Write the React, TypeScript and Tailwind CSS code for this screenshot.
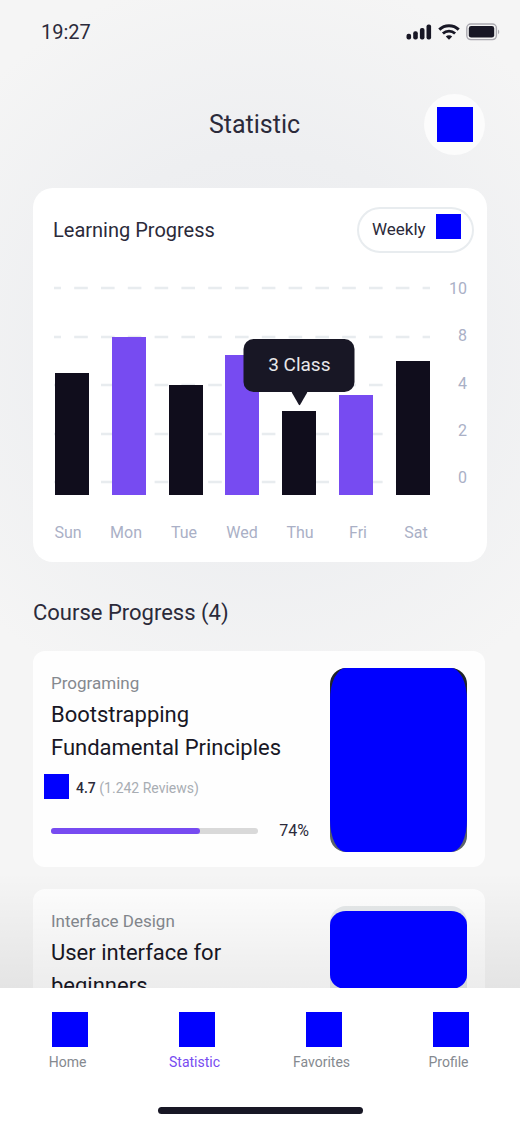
import React from "react";

type Bar = { day: string; height: number; accent?: boolean; tip?: string };

const bars: Bar[] = [
  { day: "Sun", height: 122 },
  { day: "Mon", height: 158, accent: true },
  { day: "Tue", height: 110 },
  { day: "Wed", height: 140, accent: true },
  { day: "Thu", height: 84, tip: "3 Class" },
  { day: "Fri", height: 100, accent: true },
  { day: "Sat", height: 134 },
];

const scale = ["10", "8", "4", "2", "0"];
const gridLines = [2, 51, 99, 148, 196];

function StatusBar() {
  return (
    <div className="flex h-16 shrink-0 items-center justify-between pl-[41px] pr-5 text-xl text-[#2b2a3a]">
      <span>19:27</span>
      <div className="flex items-center gap-[6px]">
        <svg width="26" height="16" viewBox="0 0 26 16" fill="#181725" aria-hidden="true">
          <rect x="0.5" y="9.8" width="4.6" height="5.7" rx="2" />
          <rect x="7.2" y="7.2" width="4.6" height="8.3" rx="2" />
          <rect x="13.9" y="4" width="4.6" height="11.5" rx="2" />
          <rect x="20.5" y="0.5" width="4.6" height="15" rx="2" />
        </svg>
        <svg width="22" height="16" viewBox="0 0 22 16" fill="none" stroke="#181725" aria-hidden="true">
          <path d="M1.3 5.6a14 14 0 0 1 19.4 0" strokeWidth="3" />
          <path d="M4.9 9.5a8.8 8.8 0 0 1 12.2 0" strokeWidth="2.8" />
          <path d="M11 15.8 7.8 12.6a4.6 4.6 0 0 1 6.4 0Z" fill="#181725" stroke="none" />
        </svg>
        <svg width="34" height="18" viewBox="0 0 34 18" aria-hidden="true">
          <rect x="0.8" y="1" width="29.6" height="15.6" rx="4" fill="none" stroke="#aaa9b0" strokeWidth="1.4" />
          <rect x="2.8" y="3" width="25.4" height="11.6" rx="2.4" fill="#181725" />
          <path d="M32 6.4c1.7.8 1.7 4 0 4.8Z" fill="#aaa9b0" />
        </svg>
      </div>
    </div>
  );
}

function ProgressChart() {
  return (
    <section className="rounded-[20px] bg-white pt-[19px] pr-[13px] pb-[17px] pl-5">
      <div className="flex items-center justify-between">
        <h2 className="text-xl text-[#2b2a3a]">Learning Progress</h2>
        <div className="relative">
          <select
            aria-label="Period"
            className="h-[46px] w-[117px] appearance-none rounded-full border-2 border-[#e8ecef] bg-white pl-[13px] text-[17px] text-[#2b2a3a]"
          >
            <option>Weekly</option>
          </select>
          <span className="pointer-events-none absolute top-[7px] right-[13px] size-[25px] bg-[#0000ff]" />
        </div>
      </div>

      <div className="mt-6 flex pr-[7px] pl-px">
        <div className="min-w-0 flex-1">
          <div className="relative mt-[9px] h-[209px]">
            <svg className="absolute inset-0 h-full w-full" aria-hidden="true">
              {gridLines.map((y) => (
                <line
                  key={y}
                  x1="0"
                  x2="100%"
                  y1={y}
                  y2={y}
                  stroke="#e8ecef"
                  strokeWidth="2.4"
                  strokeDasharray="13.6 13.2"
                  strokeDashoffset="6.6"
                />
              ))}
            </svg>
            <div className="relative flex h-full items-end justify-between pl-px">
              {bars.map((bar) => (
                <div
                  key={bar.day}
                  className={`relative w-[34px] ${bar.accent ? "bg-[#774bf1]" : "bg-[#100d1c]"}`}
                  style={{ height: bar.height }}
                >
                  {bar.tip && (
                    <div
                      role="tooltip"
                      className="absolute bottom-full left-1/2 z-10 mb-[19px] flex h-[53px] w-[111px] -translate-x-1/2 items-center justify-center rounded-[10px] bg-[#181725] text-[19px] text-[#e8e8ea]"
                    >
                      {bar.tip}
                      <svg
                        className="absolute top-full left-1/2 -translate-x-1/2"
                        width="16"
                        height="14"
                        viewBox="0 0 16 14"
                        fill="#181725"
                        aria-hidden="true"
                      >
                        <path d="M0 0h16L8.8 12.6q-.8 1.2-1.6 0Z" />
                      </svg>
                    </div>
                  )}
                </div>
              ))}
            </div>
          </div>
          <div className="-mx-[15px] mt-[26px] grid grid-cols-7 text-center text-base text-[#aab0c6]">
            {bars.map((bar) => (
              <span key={bar.day}>{bar.day}</span>
            ))}
          </div>
        </div>
        <div className="flex h-[213px] w-[37px] flex-col justify-between text-right text-base text-[#aab0c6]">
          {scale.map((value) => (
            <span key={value}>{value}</span>
          ))}
        </div>
      </div>
    </section>
  );
}

type Course = { category: string; title: string; rating?: string; reviews?: string; done?: number };

function CourseCard({
  course,
  children,
}: {
  course: Course;
  children: React.ReactNode;
}) {
  return (
    <article className="flex justify-between rounded-xl bg-[#fefefe] pt-[17px] pr-[18px] pb-[15px] pl-[18px]">
      <div className="flex w-[258px] flex-col pt-[3px]">
        <p className="text-[17px] leading-6 text-[#85898f]">{course.category}</p>
        <h3 className="mt-[3px] text-[22px] leading-[33px] text-[#181725]">{course.title}</h3>
        {course.rating && (
          <div className="-ml-[7px] mt-[10px] flex items-center gap-[7px] text-sm">
            <span className="size-[25px] bg-[#0000ff]" />
            <p className="pt-[2px] text-[#a8adb3]">
              <span className="font-medium text-[#2b2a3a]">{course.rating}</span> ({course.reviews} Reviews)
            </p>
          </div>
        )}
        {course.done !== undefined && (
          <div className="mt-5 flex items-center justify-between text-base text-[#2b2a3a]">
            <div className="h-[6px] w-[207px] rounded-full bg-[#d9d9d9]">
              <div className="h-full rounded-full bg-[#774bf1]" style={{ width: `${course.done - 2}%` }} />
            </div>
            <span>{course.done}%</span>
          </div>
        )}
      </div>
      {children}
    </article>
  );
}

const tabs = ["Home", "Statistic", "Favorites", "Profile"];

export default function App() {
  return (
    <div className="flex h-screen flex-col bg-[#f5f5f5] bg-[radial-gradient(circle_at_50%_350px,#eaebee_0,#eeeff1_200px,#f5f5f5_380px)] font-['Roboto',sans-serif]">
      <StatusBar />
      <div className="relative min-h-0 flex-1">
        <main className="h-full overflow-y-auto pr-[35px] pl-[33px] [scrollbar-width:none]">
          <header className="mt-[30px] grid grid-cols-[52px_1fr_61px] items-center">
            <h1 className="col-start-2 text-center text-[25px] text-[#2b2a3a]">Statistic</h1>
            <button
              type="button"
              aria-label="Options"
              className="flex size-[61px] items-center justify-center rounded-full bg-[#fcfcfc]"
            >
              <span className="h-[35px] w-[36px] bg-[#0000ff]" />
            </button>
          </header>

          <div className="-mr-[2px] mt-[33px]">
            <ProgressChart />
          </div>

          <h2 className="mt-[34px] text-[22px] leading-[34px] text-[#2b2a3a]">Course Progress (4)</h2>

          <div className="mt-[21px] flex flex-col gap-[22px] pb-6">
            <CourseCard
              course={{
                category: "Programing",
                title: "Bootstrapping Fundamental Principles",
                rating: "4.7",
                reviews: "1.242",
                done: 74,
              }}
            >
              <div className="h-[184px] w-[137px] rounded-2xl bg-linear-to-b from-[#1c2126] to-[#5f676d]">
                <div className="h-full rounded-[16px/32px] bg-[#0000ff]" />
              </div>
            </CourseCard>
            <CourseCard course={{ category: "Interface Design", title: "User interface for beginners" }}>
              <div className="h-[184px] w-[137px] rounded-2xl bg-[#e6e9ea] pt-[5px]">
                <div className="relative z-10 h-[78px] rounded-[16px/14px] bg-[#0000ff]" />
              </div>
            </CourseCard>
          </div>
        </main>
        <div className="pointer-events-none absolute inset-x-0 bottom-0 h-[115px] bg-linear-to-b from-black/0 to-black/7" />
      </div>

      <nav className="shrink-0 bg-white pt-6 pb-[11px]">
        <div className="grid grid-cols-4 pr-2 pl-1">
          {tabs.map((tab) => (
            <a
              key={tab}
              href={`#${tab.toLowerCase()}`}
              className={`flex flex-col items-center gap-[5px] text-sm ${
                tab === "Statistic" ? "text-[#774bf1]" : "text-[#85898f]"
              }`}
            >
              <span className="ml-1 h-[35px] w-[36px] bg-[#0000ff]" />
              {tab}
            </a>
          ))}
        </div>
        <div className="mx-auto mt-[35px] h-[7px] w-[205px] rounded-full bg-[#181725]" />
      </nav>
    </div>
  );
}
